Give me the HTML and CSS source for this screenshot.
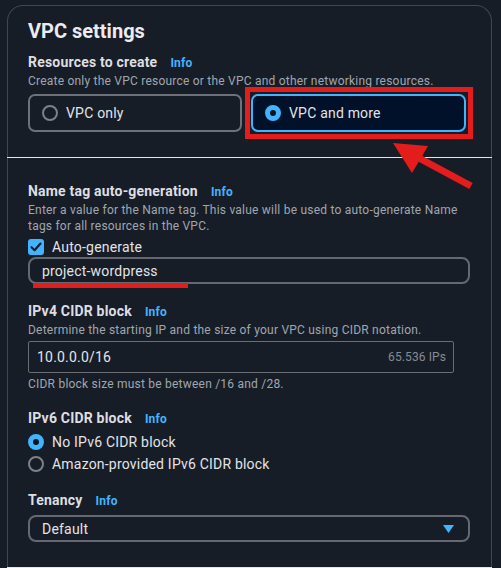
FILE: index.html
```html
<!DOCTYPE html>
<html lang="en">
<head>
<meta charset="utf-8">
<title>VPC settings</title>
<link rel="stylesheet" href="styles.css">
</head>
<body>
<div class="card">
  <section class="section top">
    <h2 class="title">VPC settings</h2>
    <div class="label-row"><span class="label">Resources to create</span><a class="info">Info</a></div>
    <p class="desc">Create only the VPC resource or the VPC and other networking resources.</p>
    <div class="tiles">
      <div class="tile">
        <span class="radio"></span><span class="tile-text">VPC only</span>
      </div>
      <div class="tile selected">
        <span class="radio checked"></span><span class="tile-text">VPC and more</span>
        <span class="highlight"></span>
      </div>
    </div>
  </section>
  <section class="section body">
    <div class="field first">
      <div class="label-row"><span class="label">Name tag auto-generation</span><a class="info">Info</a></div>
      <p class="desc">Enter a value for the Name tag. This value will be used to auto-generate Name tags for all resources in the VPC.</p>
      <div class="check-row">
        <span class="checkbox"><svg width="16" height="16" viewBox="0 0 16 16"><path d="M3.5 8.2 L6.6 11.2 L12.5 4.6" fill="none" stroke="#171d26" stroke-width="2.2" stroke-linecap="round" stroke-linejoin="round"/></svg></span>
        <span class="option-text">Auto-generate</span>
      </div>
      <div class="input rounded name-input">
        <span class="value">project-wordpress</span>
        <span class="underline"></span>
      </div>
    </div>
    <div class="field">
      <div class="label-row"><span class="label">IPv4 CIDR block</span><a class="info">Info</a></div>
      <p class="desc">Determine the starting IP and the size of your VPC using CIDR notation.</p>
      <div class="input square">
        <span class="value">10.0.0.0/16</span>
        <span class="suffix">65.536 IPs</span>
      </div>
      <p class="desc help">CIDR block size must be between /16 and /28.</p>
    </div>
    <div class="field">
      <div class="label-row"><span class="label">IPv6 CIDR block</span><a class="info">Info</a></div>
      <div class="radio-group">
        <div class="radio-row"><span class="radio checked"></span><span class="option-text">No IPv6 CIDR block</span></div>
        <div class="radio-row"><span class="radio"></span><span class="option-text">Amazon-provided IPv6 CIDR block</span></div>
      </div>
    </div>
    <div class="field">
      <div class="label-row"><span class="label">Tenancy</span><a class="info">Info</a></div>
      <div class="input rounded select">
        <span class="value">Default</span>
        <svg class="caret" width="11" height="8" viewBox="0 0 11 8"><path d="M0 0 H11 L5.5 8 Z" fill="#42b4ff"/></svg>
      </div>
    </div>
  </section>
</div>
<svg class="arrow" width="501" height="568" viewBox="0 0 501 568">
  <line x1="471" y1="186" x2="417" y2="157" stroke="#e31c1c" stroke-width="7"/>
  <polygon points="393,143 428,146 412,173" fill="#e31c1c"/>
</svg>
</body>
</html>
```
FILE: styles.css
```css
html, body {
  margin: 0;
  padding: 0;
  height: 568px;
  overflow: hidden;
  background: #171d26;
}
body {
  font-family: Roboto, "Noto Sans", sans-serif;
  color: #dedee3;
  position: relative;
}
.card {
  margin: 5px 0 0 7px;
  width: 485px;
  box-sizing: border-box;
  height: 562px;
  border: 1px solid #424650;
  border-bottom: none;
  border-radius: 16px 16px 0 0;
}
.section {
  padding-left: 20px;
}
.section.top {
  padding-top: 13px;
  padding-bottom: 25px;
}
.section.body {
  border-top: 1px solid #e3e5e8;
  border-bottom: 1px solid #e3e5e8;
  margin-left: -1px;
  margin-right: -1px;
  padding-left: 21px;
  height: 409px;
}
.title {
  margin: 0;
  font-size: 20px;
  line-height: 24px;
  font-weight: 700;
  color: #ebebf0;
}
.label-row {
  display: flex;
  align-items: baseline;
  gap: 13px;
  line-height: 20px;
}
.top .label-row {
  margin-top: 9px;
}
.label {
  font-size: 14px;
  font-weight: 700;
  letter-spacing: 0.2px;
  color: #dedee3;
}
.info {
  font-size: 12px;
  font-weight: 700;
  letter-spacing: 0.2px;
  color: #42b4ff;
}
.desc {
  margin: 0;
  font-size: 12px;
  line-height: 16px;
  letter-spacing: 0.22px;
  color: #a0a6b0;
  max-width: 442px;
}
.tiles {
  margin-top: 5px;
  display: flex;
  gap: 9px;
  width: 438px;
}
.tile {
  position: relative;
  box-sizing: border-box;
  height: 38px;
  width: 214px;
  border: 2px solid #6c717a;
  border-radius: 7px;
  display: flex;
  align-items: center;
  padding-left: 12px;
  gap: 8px;
}
.tile.selected {
  width: 215px;
  border-color: #42b4ff;
  background: #001129;
}
.tile-text {
  font-size: 14px;
  line-height: 20px;
  letter-spacing: 0.2px;
  color: #e3e3e8;
}
.highlight {
  position: absolute;
  left: -8px;
  top: -9px;
  right: -9px;
  bottom: -9px;
  border: 5px solid #e31c1c;
}
.radio {
  box-sizing: border-box;
  width: 16px;
  height: 16px;
  border-radius: 50%;
  border: 2px solid #7d8188;
  flex: none;
}
.radio.checked {
  border: 5px solid #42b4ff;
  background: #0f141a;
}
.field {
  margin-top: 16px;
}
.field.first {
  margin-top: 23px;
}
.field + .field {
  margin-top: 17px;
}
.field + .field + .field {
  margin-top: 16px;
}
.check-row,
.radio-row {
  display: flex;
  align-items: center;
  gap: 8px;
  height: 20px;
}
.check-row {
  margin-top: 3px;
}
.checkbox {
  width: 16px;
  height: 16px;
  border-radius: 3px;
  background: #42b4ff;
  display: flex;
}
.option-text {
  font-size: 14px;
  line-height: 20px;
  letter-spacing: 0.2px;
  color: #e3e3e8;
}
.input {
  position: relative;
  box-sizing: border-box;
  width: 442px;
  display: flex;
  align-items: center;
  font-size: 14px;
  letter-spacing: 0.2px;
}
.input.rounded {
  height: 27px;
  border: 2px solid #656871;
  border-radius: 8px;
  padding: 0 14px 0 12px;
}
.input.square {
  margin-top: 3px;
  width: 426px;
  height: 32px;
  border: 1px solid #6a6d74;
  border-radius: 2px;
  padding: 0 7px 0 8px;
}
.value {
  color: #e3e3e8;
  flex: 1;
}
.suffix {
  font-size: 12px;
  letter-spacing: 0.1px;
  color: #868a92;
}
.underline {
  position: absolute;
  left: 3px;
  top: 24px;
  width: 155px;
  height: 5px;
  background: #e31c1c;
}
.help {
  margin-top: 3px;
}
.radio-group {
  margin-top: 3px;
  display: flex;
  flex-direction: column;
  gap: 2px;
}
.select {
  margin-top: 4px;
}
.caret {
  display: block;
}
.arrow {
  position: absolute;
  left: 0;
  top: 0;
  pointer-events: none;
}
```
